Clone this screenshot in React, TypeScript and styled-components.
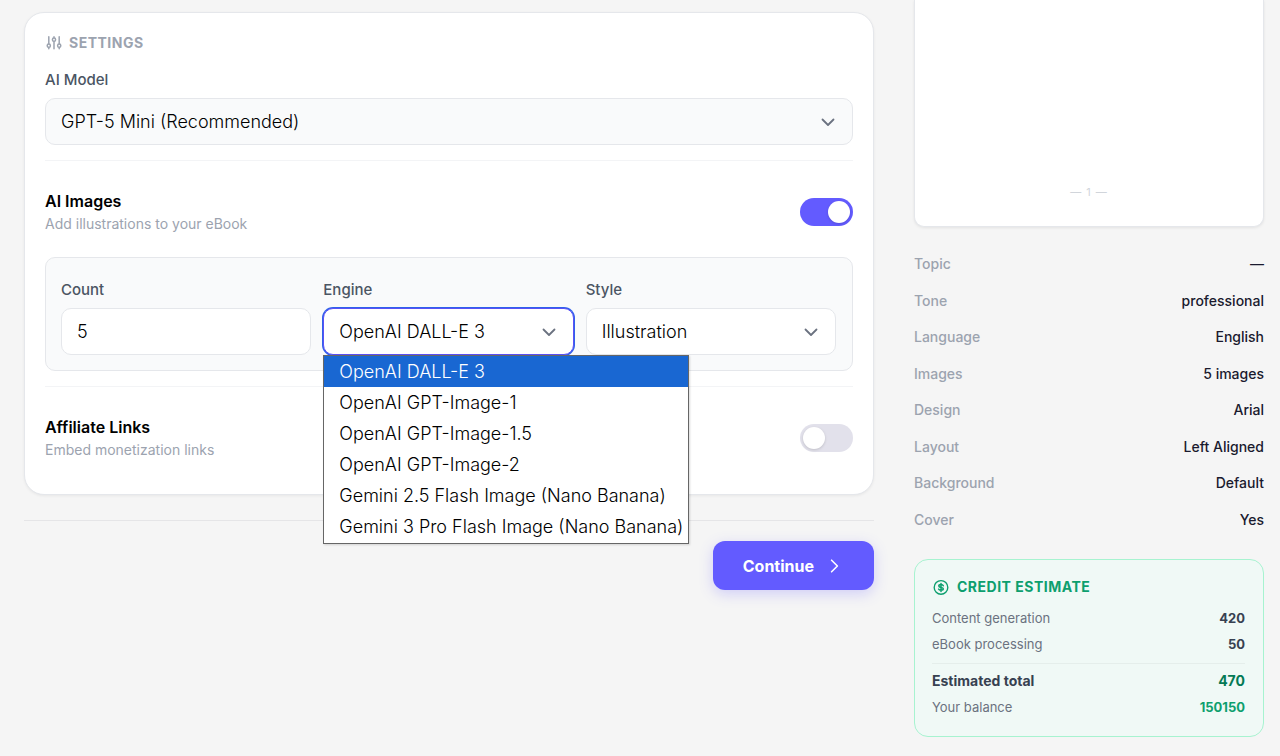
import React, { useState } from "react";
import styled, { createGlobalStyle } from "styled-components";

const Global = createGlobalStyle`
  *, *::before, *::after { box-sizing: border-box; }
  body {
    margin: 0;
    background: #f5f5f5;
    color: #000;
    font-family: Inter, "Liberation Sans", sans-serif;
    font-size: 14px;
    line-height: 20px;
  }
  button, input, select { font: inherit; color: inherit; }
  p, h2, h3, dl, dd, ul { margin: 0; padding: 0; }
`;

const Page = styled.div`
  display: grid;
  grid-template-columns: minmax(0, 1fr) 350px;
  column-gap: 40px;
  padding: 0 16px 19px 24px;
  align-items: start;
`;

const Main = styled.main`
  padding-top: 12px;
`;

const Card = styled.section`
  background: #fff;
  border: 1px solid #e5e7eb;
  border-radius: 20px;
  padding: 20px 20px 33px;
  box-shadow: 0 1px 3px rgba(0, 0, 0, 0.06);
`;

const CardTitle = styled.h2`
  display: flex;
  align-items: center;
  gap: 6px;
  font-size: 14px;
  line-height: 20px;
  font-weight: 700;
  letter-spacing: 0.5px;
  color: #9ca3af;
  text-transform: uppercase;
`;

const Field = styled.div`
  display: flex;
  flex-direction: column;
  min-width: 0;
`;

const Label = styled.label`
  font-size: 15px;
  line-height: 24px;
  font-weight: 500;
  color: #4b5563;
  margin-bottom: 6px;
`;

const ModelField = styled(Field)`
  margin-top: 15px;
`;

const SelectWrap = styled.div`
  position: relative;
  display: grid;
`;

const controlStyle = `
  width: 100%;
  height: 47px;
  padding: 0 15px;
  border: 1px solid #e5e7eb;
  border-radius: 10px;
  font-size: 18px;
  font-weight: 300;
  outline: none;
`;

const Select = styled.select<{ $tint?: boolean; $active?: boolean }>`
  ${controlStyle}
  appearance: none;
  background: ${(p) => (p.$tint ? "#f9fafb" : "#fff")};
  ${(p) => p.$active && "border-color: #5b50f5; box-shadow: 0 0 0 1px #2f62ea;"}
`;

const Input = styled.input`
  ${controlStyle}
  background: #fff;
`;

const Chevron = styled.svg`
  position: absolute;
  right: 16px;
  top: 14px;
  width: 18px;
  height: 20px;
  pointer-events: none;
`;

const Divider = styled.hr`
  border: 0;
  border-top: 1px solid #f3f4f6;
  margin: 15px 0 0;
`;

const ToggleRow = styled.div`
  display: flex;
  align-items: center;
  justify-content: space-between;
  padding-top: 28px;
`;

const ToggleTitle = styled.label`
  display: block;
  font-size: 16px;
  line-height: 24px;
  font-weight: 600;
`;

const ToggleHint = styled.p`
  font-size: 14px;
  line-height: 22px;
  color: #9ca3af;
`;

const Switch = styled.input`
  appearance: none;
  flex: none;
  width: 53px;
  height: 28px;
  margin: 0;
  padding: 3px;
  border-radius: 14px;
  background: #e2e1eb;
  display: flex;
  cursor: pointer;
  &::before {
    content: "";
    width: 22px;
    height: 22px;
    border-radius: 50%;
    background: #fff;
    box-shadow: 0 1px 3px rgba(0, 0, 0, 0.15);
  }
  &:checked {
    background: #635bff;
    justify-content: flex-end;
  }
`;

const ImagePanel = styled.div`
  display: grid;
  grid-template-columns: repeat(3, minmax(0, 1fr));
  gap: 12px;
  margin-top: 22px;
  padding: 20px 16px 15px 15px;
  border: 1px solid #e5e7eb;
  border-radius: 10px;
  background: #f9fafb;
`;

const Menu = styled.ul`
  position: absolute;
  z-index: 2;
  top: 100%;
  left: 0;
  width: 366px;
  padding-bottom: 1px;
  border: 1px solid #666;
  background: #fff;
  box-shadow: 1px 1px 2px rgba(0, 0, 0, 0.15);
  list-style: none;
`;

const Option = styled.li<{ $selected: boolean }>`
  padding: 0 15px;
  font-size: 18px;
  line-height: 31px;
  font-weight: 300;
  white-space: nowrap;
  background: ${(p) => (p.$selected ? "#1967d2" : "#fff")};
  color: ${(p) => (p.$selected ? "#fff" : "#000")};
`;

const Footer = styled.footer`
  display: flex;
  justify-content: flex-end;
  margin-top: 25px;
  padding-top: 20px;
  border-top: 1px solid #e5e5e7;
`;

const Continue = styled.button`
  display: flex;
  align-items: center;
  gap: 12px;
  height: 49px;
  padding: 0 30px;
  border: 0;
  border-radius: 12px;
  background: #635bff;
  color: #fff;
  font-size: 16px;
  font-weight: 700;
  box-shadow: 0 4px 14px rgba(99, 91, 255, 0.25);
`;

const Sheet = styled.div`
  display: flex;
  justify-content: center;
  padding: 184px 0 25px;
  border: 1px solid #e5e7eb;
  border-top: 0;
  border-radius: 0 0 10px 10px;
  background: #fff;
  box-shadow: 0 1px 3px rgba(0, 0, 0, 0.08);
  font-size: 11px;
  line-height: 17px;
  letter-spacing: 1px;
  color: #d1d5db;
`;

const Summary = styled.dl`
  display: grid;
  grid-auto-rows: 1fr;
  height: 292px;
  margin-top: 19px;
`;

const SummaryRow = styled.div`
  display: flex;
  align-items: center;
  justify-content: space-between;
  font-weight: 500;
  dt { color: #9ca3af; }
  dd { color: #1a1a2e; }
`;

const Credit = styled.section`
  margin-top: 21px;
  padding: 17px 18px 16px 17px;
  border: 1px solid #a7f3d0;
  border-radius: 14px;
  background: #f0f9f6;
`;

const CreditTitle = styled.h3`
  display: flex;
  align-items: center;
  gap: 7px;
  margin-bottom: 8px;
  font-size: 14px;
  line-height: 20px;
  font-weight: 700;
  letter-spacing: 0.5px;
  color: #0d9f6e;
  text-transform: uppercase;
`;

const CreditRow = styled.div<{ $total?: boolean; $color?: string }>`
  display: flex;
  align-items: center;
  justify-content: space-between;
  height: 26px;
  font-size: ${(p) => (p.$total ? 14 : 13)}px;
  color: #6b7280;
  ${(p) => p.$total && "height: 31px; padding: 4px 0 1px; margin-top: 6px; border-top: 1px solid #e5eeeb;"}
  dt { ${(p) => p.$total && "font-weight: 700; color: #374151;"} }
  dd { font-weight: 700; color: ${(p) => p.$color ?? "#374151"}; }
`;

const engines = [
  "OpenAI DALL-E 3",
  "OpenAI GPT-Image-1",
  "OpenAI GPT-Image-1.5",
  "OpenAI GPT-Image-2",
  "Gemini 2.5 Flash Image (Nano Banana)",
  "Gemini 3 Pro Flash Image (Nano Banana)",
];

const summary = [
  ["Topic", "—"],
  ["Tone", "professional"],
  ["Language", "English"],
  ["Images", "5 images"],
  ["Design", "Arial"],
  ["Layout", "Left Aligned"],
  ["Background", "Default"],
  ["Cover", "Yes"],
];

function Arrow() {
  return (
    <Chevron viewBox="0 0 18 20" fill="none" stroke="#6b7280" strokeWidth="1.8" strokeLinecap="round" strokeLinejoin="round" aria-hidden="true">
      <path d="M3.5 7.5 9 13l5.5-5.5" />
    </Chevron>
  );
}

function SlidersIcon() {
  return (
    <svg width="18" height="18" viewBox="0 0 18 18" fill="none" stroke="currentColor" strokeWidth="1.5" strokeLinecap="round" aria-hidden="true">
      <path d="M3.8 2.8v7M3.8 13.6v1.2M9 2.8v1M9 7.6v7.2M14.2 2.8v7M14.2 13.6v1.2" />
      <circle cx="3.8" cy="11.7" r="1.6" />
      <circle cx="9" cy="5.7" r="1.6" />
      <circle cx="14.2" cy="11.7" r="1.6" />
    </svg>
  );
}

function DollarIcon() {
  return (
    <svg width="18" height="18" viewBox="0 0 18 18" fill="none" stroke="currentColor" strokeLinecap="round" aria-hidden="true">
      <circle cx="9" cy="9.4" r="6.8" strokeWidth="1.4" />
      <path d="M11.3 7.7C11 6.9 10.1 6.6 9 6.6c-1.3 0-2.2.5-2.2 1.4 0 1 .9 1.2 2.2 1.4s2.3.5 2.3 1.4c0 1-1 1.5-2.3 1.5-1.2 0-2.1-.4-2.4-1.2M9 5.5v7.9" strokeWidth="1.5" />
    </svg>
  );
}

function NextIcon() {
  return (
    <svg width="18" height="18" viewBox="0 0 18 18" fill="none" stroke="currentColor" strokeWidth="1.6" strokeLinecap="round" strokeLinejoin="round" aria-hidden="true">
      <path d="M5.6 3.2 11.4 9l-5.8 5.8" />
    </svg>
  );
}

export default function App() {
  const [images, setImages] = useState(true);
  const [links, setLinks] = useState(false);
  const [count, setCount] = useState("5");
  const [engine, setEngine] = useState(engines[0]);

  return (
    <>
      <Global />
      <Page>
        <Main>
          <Card>
            <CardTitle>
              <SlidersIcon />
              Settings
            </CardTitle>
            <ModelField>
              <Label htmlFor="model">AI Model</Label>
              <SelectWrap>
                <Select id="model" $tint>
                  <option>GPT-5 Mini (Recommended)</option>
                </Select>
                <Arrow />
              </SelectWrap>
            </ModelField>
            <Divider />
            <ToggleRow>
              <div>
                <ToggleTitle htmlFor="images">AI Images</ToggleTitle>
                <ToggleHint>Add illustrations to your eBook</ToggleHint>
              </div>
              <Switch id="images" type="checkbox" role="switch" checked={images} onChange={(e) => setImages(e.target.checked)} />
            </ToggleRow>
            <ImagePanel>
              <Field>
                <Label htmlFor="count">Count</Label>
                <Input id="count" inputMode="numeric" value={count} onChange={(e) => setCount(e.target.value)} />
              </Field>
              <Field>
                <Label htmlFor="engine">Engine</Label>
                <SelectWrap>
                  <Select id="engine" $active value={engine} onChange={(e) => setEngine(e.target.value)}>
                    {engines.map((name) => (
                      <option key={name}>{name}</option>
                    ))}
                  </Select>
                  <Arrow />
                  <Menu role="listbox" aria-label="Engine">
                    {engines.map((name) => (
                      <Option key={name} role="option" aria-selected={name === engine} $selected={name === engine} onClick={() => setEngine(name)}>
                        {name}
                      </Option>
                    ))}
                  </Menu>
                </SelectWrap>
              </Field>
              <Field>
                <Label htmlFor="style">Style</Label>
                <SelectWrap>
                  <Select id="style">
                    <option>Illustration</option>
                  </Select>
                  <Arrow />
                </SelectWrap>
              </Field>
            </ImagePanel>
            <Divider />
            <ToggleRow>
              <div>
                <ToggleTitle htmlFor="links">Affiliate Links</ToggleTitle>
                <ToggleHint>Embed monetization links</ToggleHint>
              </div>
              <Switch id="links" type="checkbox" role="switch" checked={links} onChange={(e) => setLinks(e.target.checked)} />
            </ToggleRow>
          </Card>
          <Footer>
            <Continue type="button">
              Continue
              <NextIcon />
            </Continue>
          </Footer>
        </Main>
        <aside>
          <Sheet>— 1 —</Sheet>
          <Summary>
            {summary.map(([name, value]) => (
              <SummaryRow key={name}>
                <dt>{name}</dt>
                <dd>{value}</dd>
              </SummaryRow>
            ))}
          </Summary>
          <Credit>
            <CreditTitle>
              <DollarIcon />
              Credit Estimate
            </CreditTitle>
            <dl>
              <CreditRow><dt>Content generation</dt><dd>420</dd></CreditRow>
              <CreditRow><dt>eBook processing</dt><dd>50</dd></CreditRow>
              <CreditRow $total $color="#057a55"><dt>Estimated total</dt><dd>470</dd></CreditRow>
              <CreditRow $color="#0d9f6e"><dt>Your balance</dt><dd>150150</dd></CreditRow>
            </dl>
          </Credit>
        </aside>
      </Page>
    </>
  );
}
